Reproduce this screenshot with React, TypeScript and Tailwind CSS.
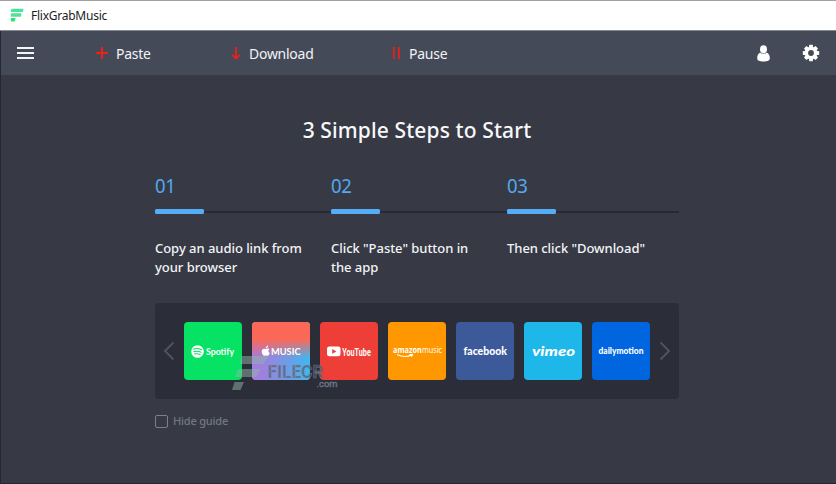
import type { ReactNode } from "react";

const UI = "font-['Noto_Sans','Open_Sans',sans-serif]";

function BrandMark() {
  return (
    <svg width="15" height="15" viewBox="0 0 15 15" className="block">
      <path d="M2 .7h11.500l-.6 3.400H.8L1 1.800Z" fill="#4fe29a" />
      <path d="M.8 5.300h10.800l-.7 3.400H.8Z" fill="#4fe29a" />
      <path d="M.8 10.100h4.800l-.9 3.400H1.600l-.8-.8Z" fill="#2fe07a" />
    </svg>
  );
}

function Tool({ icon, label, className }: { icon: ReactNode; label: string; className: string }) {
  return (
    <button className={`flex h-full items-center text-left ${className}`}>
      {icon}
      <span className="origin-left scale-x-[.93] text-[15px] leading-[20px] tracking-[-0.25px] text-[#f2f3f6]">{label}</span>
    </button>
  );
}

function Step({ num, text }: { num: string; text: ReactNode }) {
  return (
    <div>
      <div className="h-[35px] origin-left scale-x-[.95] text-[19.5px] leading-[24px] tracking-[-0.4px] text-[#54a9f0]">{num}</div>
      <div className="flex h-[5px] items-center">
        <div className="h-[5px] w-[49px] rounded-[1.5px] bg-[#54adf5]" />
        <div className="h-[2px] flex-1 bg-[#272a36]" />
      </div>
      <p className="mt-[25px] text-[13px] font-medium leading-[19px] tracking-[-0.04px] whitespace-nowrap text-[#f3f4f6]">{text}</p>
    </div>
  );
}

function Tile({ className, children }: { className: string; children: ReactNode }) {
  return (
    <div className={`size-[58px] overflow-hidden rounded-[4px] ${className}`}>
      <svg width="58" height="58" viewBox="0 0 58 58" fill="#fff" className="block">
        {children}
      </svg>
    </div>
  );
}

function Chevron({ d }: { d: string }) {
  return (
    <svg width="12" height="20" viewBox="0 0 12 20" fill="none" stroke="#50535f" strokeWidth="2" className="block">
      <path d={d} />
    </svg>
  );
}

export default function App() {
  return (
    <div className={`relative flex h-[484px] w-[836px] flex-col overflow-hidden bg-[#373a45] ${UI}`}>
      <header className="flex h-[31px] shrink-0 items-center border-t border-b border-t-[#a0a0a0] border-b-[#858992] bg-white pl-[10px]">
        <BrandMark />
        <span className="ml-[6px] text-[12px] leading-[16px] tracking-[-0.25px] text-[#1c1c1c]">FlixGrabMusic</span>
      </header>

      <nav className="flex h-[44px] shrink-0 items-center bg-[#454a58] pl-[17px]">
        <div className="flex w-[17px] flex-col gap-[3px]">
          <i className="h-[2px] bg-[#f4f5f7]" />
          <i className="h-[2px] bg-[#f4f5f7]" />
          <i className="h-[2px] bg-[#f4f5f7]" />
        </div>
        <Tool
          className="ml-[61px] w-[136px] gap-[8px]"
          label="Paste"
          icon={
            <svg width="13" height="12" viewBox="0 0 13 12" stroke="#f02015" strokeWidth="2">
              <path d="M7 0v12M1 6h12" />
            </svg>
          }
        />
        <Tool
          className="w-[161px] gap-[8px]"
          label="Download"
          icon={
            <svg width="10" height="14" viewBox="0 0 10 14" fill="none" stroke="#f02015" strokeWidth="1.8">
              <path d="M5 1v11.500M1.300 8.800 5 12.400l3.700-3.600" />
            </svg>
          }
        />
        <Tool
          className="w-[100px] gap-[8px]"
          label="Pause"
          icon={
            <svg width="9" height="12" viewBox="0 0 9 12" fill="#f02015">
              <path d="M0.900 0h1.700v12H.9ZM6 0h1.700v12H6Z" />
            </svg>
          }
        />
        <svg width="13" height="17" viewBox="0 0 13 17" fill="#fff" className="ml-auto">
          <ellipse cx="6.500" cy="4.300" rx="3.500" ry="4" />
          <path d="M3.200 7.600C1.100 8.500.2 10.700.2 13c0 2.700 2.200 3.500 6.300 3.500s6.300-.8 6.300-3.500c0-2.300-.9-4.500-3-5.400C8.700 9.200 4.300 9.200 3.200 7.600Z" />
        </svg>
        <svg width="18" height="18" viewBox="0 0 18 18" className="mr-[16px] ml-[32px]">
          <g fill="#fff">
            <circle cx="9" cy="9" r="6.200" />
            <path d="M7.300.8h3.400l.5 3H6.800Zm0 16.400h3.400l.5-3H6.800ZM.8 7.300v3.400l3 .5V6.800Zm16.400 0v3.400l-3 .5V6.800Z" />
            <path d="M7.300.8h3.400l.5 3H6.800Zm0 16.400h3.400l.5-3H6.800ZM.8 7.300v3.400l3 .5V6.800Zm16.400 0v3.400l-3 .5V6.800Z" transform="rotate(45 9 9)" />
          </g>
          <circle cx="9" cy="9" r="2.900" fill="#454a58" />
        </svg>
      </nav>

      <main className="ml-[155px] w-[524px]">
        <h1 className="pt-[41px] text-center text-[21px] font-medium leading-[28px] tracking-[0.12px] text-[#f7f8fa]">3 Simple Steps to Start</h1>
        <section className="mt-[30px] grid h-[129px] grid-cols-[176px_176px_172px]">
          <Step num="01" text={<>Copy an audio link from<br />your browser</>} />
          <Step num="02" text={<>Click "Paste" button in<br />the app</>} />
          <Step num="03" text={'Then click "Download"'} />
        </section>
        <section className="flex h-[96px] items-center justify-between rounded-[4px] bg-[#2b2d38] px-[8px]">
          <Chevron d="M10.500 1.500 2 10l8.500 8.500" />
          <div className="flex gap-[10px]">
            <Tile className="bg-[#05e264]">
              <circle cx="13.500" cy="29.500" r="6.300" />
              <path d="M9.500 27q4.500-1.200 8 .7M10 29.600q3.800-1 7 .6M10.500 32q3-.8 5.600.5" fill="none" stroke="#05e264" strokeWidth="1.100" strokeLinecap="round" />
              <text x="22" y="32.800" fontSize="9.500" fontWeight="700" textLength="28" lengthAdjust="spacingAndGlyphs" fontFamily="Lato, sans-serif">Spotify</text>
            </Tile>
            <Tile className="bg-[linear-gradient(176deg,#8f80e5_0%,#a87fdb_30%,#cf769d_52%,#fb6858_70%,#fb6858_100%)]">
              <defs>
                <linearGradient id="sky" x1="0" x2="1">
                  <stop offset=".15" stopColor="#48b2ee" stopOpacity="0" />
                  <stop offset="1" stopColor="#3fb8f0" />
                </linearGradient>
                <linearGradient id="warm" x1="0" y1="0" x2="0" y2="1">
                  <stop offset=".3" stopColor="#fb6858" />
                  <stop offset=".62" stopColor="#fb6858" stopOpacity="0" />
                </linearGradient>
              </defs>
              <rect width="58" height="58" fill="#a07fde" />
              <rect width="58" height="58" fill="url(#sky)" />
              <rect width="58" height="58" fill="url(#warm)" />
              <path d="M14.100 26.800c.8 0 1.400-.5 2.300-.2.4.1.8.4 1 .7-1.500 1-1.300 3 .4 3.700-.5 1.400-1.400 2.800-2.300 2.800-.7 0-.9-.4-1.700-.4s-1 .4-1.700.4c-1.300 0-3.400-4.300-1.700-6.300 1.200-1.400 2.400-.7 3.700-.7Zm-.2-.5c-.1-1.400.9-2.600 2.200-2.800.2 1.400-1 2.700-2.200 2.800Z" />
              <text x="19" y="33.100" fontSize="9.700" fontWeight="700" textLength="29.500" lengthAdjust="spacingAndGlyphs" fontFamily="Lato, sans-serif">MUSIC</text>
            </Tile>
            <Tile className="bg-[#ed3f38]">
              <rect x="7" y="24.500" width="13.500" height="9.800" rx="2.300" />
              <path d="m12.200 27.100 4.200 2.300-4.200 2.300Z" fill="#ed3f38" />
              <text x="22.300" y="33.500" fontSize="10.800" fontWeight="700" textLength="28.500" lengthAdjust="spacingAndGlyphs" fontFamily="Roboto, sans-serif">YouTube</text>
            </Tile>
            <Tile className="bg-[#ff9800]">
              <text x="5" y="31.300" fontSize="8.800" textLength="49" lengthAdjust="spacingAndGlyphs" fontFamily="'Open Sans', sans-serif">
                <tspan fontWeight="700">amazon</tspan>music
              </text>
              <path d="M9 32.500q7.500 3.800 15 .5m-2.500-.4 3-.1-1 2.400" fill="none" stroke="#fff" strokeWidth="1.100" />
            </Tile>
            <Tile className="bg-[#3c5a99]">
              <text x="7.500" y="33.200" fontSize="11" fontWeight="900" textLength="43.500" lengthAdjust="spacingAndGlyphs" fontFamily="Lato, sans-serif">facebook</text>
            </Tile>
            <Tile className="bg-[#1db7ea]">
              <text x="8" y="34" fontSize="14" fontWeight="900" fontStyle="italic" textLength="43" lengthAdjust="spacingAndGlyphs" fontFamily="Lato, sans-serif">vimeo</text>
            </Tile>
            <Tile className="bg-[#0066e0]">
              <text x="6.500" y="31.700" fontSize="8.500" fontWeight="900" textLength="45" lengthAdjust="spacingAndGlyphs" fontFamily="Lato, sans-serif">dailymotion</text>
            </Tile>
          </div>
          <Chevron d="M1.500 1.500 10 10l-8.500 8.500" />
        </section>
        <label className="mt-[13px] flex items-center gap-[5px] text-[11px] font-medium leading-[18px] tracking-[-0.2px] text-[#747782]">
          <span className="size-[13px] rounded-[2px] border border-[#7d808b]" />
          Hide guide
        </label>
      </main>

      {/* translucent watermark laid over the service tiles */}
      <svg width="110" height="38" viewBox="0 0 110 38" className="pointer-events-none absolute top-[355px] left-[231px]">
        <g fill="#8fb5a8" fillOpacity=".5">
          <path d="M11 1h27l-6 8H8.500Z" />
          <path d="M7 14h23l-5 8H4Z" />
          <path d="M3.500 27h9.500l-3.500 8H1Z" />
        </g>
        <g fill="#4a5268" fillOpacity=".65" stroke="#8c94a5" strokeOpacity=".65" strokeWidth=".6" fontWeight="700" fontFamily="Roboto, sans-serif">
          <text x="36.500" y="23" fontSize="18" textLength="56" lengthAdjust="spacingAndGlyphs">FILECR</text>
          <text x="85.500" y="32" fontSize="9" fontWeight="400" textLength="21" lengthAdjust="spacingAndGlyphs">.com</text>
        </g>
      </svg>

      {/* one-pixel window frame */}
      <div className="pointer-events-none absolute inset-x-0 top-[31px] bottom-0 border-b border-l border-[#252833]" />
    </div>
  );
}
